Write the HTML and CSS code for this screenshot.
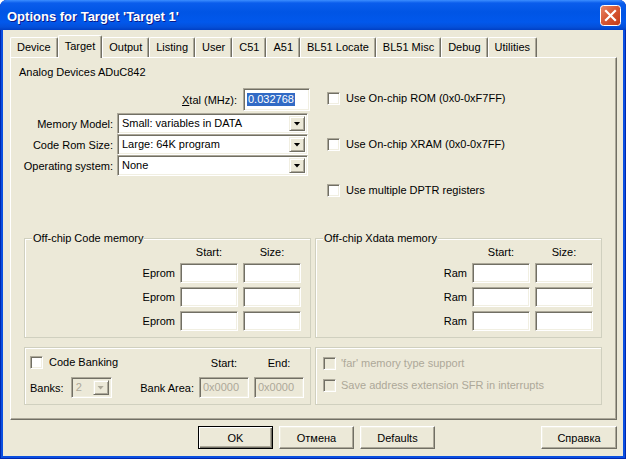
FILE: index.html
```html
<!DOCTYPE html>
<html lang="en">
<head>
    <meta charset="UTF-8">
    <title>Options for Target 'Target 1'</title>
    <link rel="stylesheet" href="styles.css">
</head>
<body>
<div class="window">
    <div class="titlebar">
        <span class="titlebar__text">Options for Target 'Target 1'</span>
        <button class="titlebar__close" aria-label="Close">
            <svg width="21" height="21" viewBox="0 0 21 21">
                <defs>
                    <linearGradient id="closeFill" x1="0" y1="0" x2="1" y2="1">
                        <stop offset="0" stop-color="#E9896B"/>
                        <stop offset="0.45" stop-color="#D85A36"/>
                        <stop offset="1" stop-color="#C23A17"/>
                    </linearGradient>
                </defs>
                <rect x="0.5" y="0.5" width="20" height="20" rx="3" fill="url(#closeFill)" stroke="#fff"/>
                <path d="M6 6 L15 15 M15 6 L6 15" stroke="#fff" stroke-width="2.2" stroke-linecap="square"/>
            </svg>
        </button>
    </div>

    <div class="client">
        <div class="tabs">
            <div class="tab">Device</div>
            <div class="tab tab--active">Target</div>
            <div class="tab">Output</div>
            <div class="tab">Listing</div>
            <div class="tab">User</div>
            <div class="tab">C51</div>
            <div class="tab">A51</div>
            <div class="tab">BL51 Locate</div>
            <div class="tab">BL51 Misc</div>
            <div class="tab">Debug</div>
            <div class="tab">Utilities</div>
        </div>

        <div class="panel">
            <div class="device-name">Analog Devices ADuC842</div>

            <div class="upper">
                <div class="settings">
                    <div class="xtal-row">
                        <span><u>X</u>tal (MHz):</span>
                        <div class="edit edit--xtal"><span class="selection">0.032768</span></div>
                    </div>
                    <div class="field-row">
                        <span class="field-label">Memory Model:</span>
                        <div class="combo"><span class="combo__value">Small: variables in DATA</span><span class="combo__button"></span></div>
                    </div>
                    <div class="field-row">
                        <span class="field-label">Code Rom Size:</span>
                        <div class="combo"><span class="combo__value">Large: 64K program</span><span class="combo__button"></span></div>
                    </div>
                    <div class="field-row">
                        <span class="field-label">Operating system:</span>
                        <div class="combo"><span class="combo__value">None</span><span class="combo__button"></span></div>
                    </div>
                </div>

                <div class="options">
                    <label class="check"><span class="check__box"></span>Use On-chip ROM (0x0-0xF7FF)</label>
                    <label class="check"><span class="check__box"></span>Use On-chip XRAM (0x0-0x7FF)</label>
                    <label class="check"><span class="check__box"></span>Use multiple DPTR registers</label>
                </div>
            </div>

            <div class="groups">
                <div class="group">
                    <span class="group__title">Off-chip Code memory</span>
                    <div class="mem-grid">
                        <span></span><span class="col-head">Start:</span><span class="col-head">Size:</span>
                        <span class="row-label">Eprom</span><div class="edit"></div><div class="edit"></div>
                        <span class="row-label">Eprom</span><div class="edit"></div><div class="edit"></div>
                        <span class="row-label">Eprom</span><div class="edit"></div><div class="edit"></div>
                    </div>
                </div>

                <div class="group">
                    <span class="group__title">Off-chip Xdata memory</span>
                    <div class="mem-grid mem-grid--xdata">
                        <span></span><span class="col-head">Start:</span><span class="col-head">Size:</span>
                        <span class="row-label">Ram</span><div class="edit"></div><div class="edit"></div>
                        <span class="row-label">Ram</span><div class="edit"></div><div class="edit"></div>
                        <span class="row-label">Ram</span><div class="edit"></div><div class="edit"></div>
                    </div>
                </div>

                <div class="group group--banking">
                    <div class="bank-row">
                        <label class="check bank-row__check"><span class="check__box"></span>Code Banking</label>
                        <span class="bank-head">Start:</span>
                        <span class="bank-head">End:</span>
                    </div>
                    <div class="bank-row bank-row--fields">
                        <span>Banks:</span>
                        <div class="combo combo--small combo--disabled"><span class="combo__value">2</span><span class="combo__button"></span></div>
                        <span class="bank-area">Bank Area:</span>
                        <div class="edit edit--bank edit--disabled">0x0000</div>
                        <div class="edit edit--bank edit--disabled">0x0000</div>
                    </div>
                </div>

                <div class="group group--flags">
                    <label class="check check--disabled"><span class="check__box"></span>'far' memory type support</label>
                    <label class="check check--disabled"><span class="check__box"></span>Save address extension SFR in interrupts</label>
                </div>
            </div>
        </div>

        <div class="buttons">
            <button class="button button--default">OK</button>
            <button class="button">Отмена</button>
            <button class="button">Defaults</button>
            <button class="button button--help">Справка</button>
        </div>
    </div>
</div>
</body>
</html>
```

FILE: styles.css
```css
/* Reset */
* {
    margin: 0;
    padding: 0;
    box-sizing: border-box;
}
body {
    width: 626px;
    height: 459px;
    overflow: hidden;
    background: #fff;
    font-family: "Liberation Sans", Arial, sans-serif;
    font-size: 11px;
    color: #000;
}

/* Window frame */
.window {
    width: 626px;
    height: 459px;
    display: flex;
    flex-direction: column;
    background: #0A4FE0;
    border-radius: 7px 7px 0 0;
    overflow: hidden;
    box-shadow: inset 1px 0 #0028B0, inset -1px 0 #0028B0, inset 0 -1px #0028B0;
}
.titlebar {
    height: 30px;
    flex: none;
    display: flex;
    align-items: flex-start;
    justify-content: space-between;
    padding: 5px 5px 0 7px;
    background: linear-gradient(to bottom, #3C8EFF 0, #0A5DEC 3px, #0055E5 12px, #0158EC 22px, #0450DA 27px, #003FC4 30px);
}
.titlebar__text {
    padding-top: 1px;
    line-height: 21px;
    font-size: 13px;
    font-weight: bold;
    color: #fff;
    text-shadow: 1px 1px #0A1A8A;
}
.titlebar__close {
    width: 21px;
    height: 21px;
    border: none;
    background: none;
    display: block;
}
.titlebar__close svg {
    display: block;
}

.client {
    flex: 1;
    margin: 0 3px 3px;
    padding: 5px 6px 0 7px;
    background: #ECE9D8;
    display: flex;
    flex-direction: column;
}

/* Tabs */
.tabs {
    height: 22px;
    display: flex;
    align-items: flex-end;
    position: relative;
    z-index: 1;
}
.tab {
    height: 20px;
    padding: 0 6px;
    line-height: 19px;
    border-top: 1px solid #fff;
    border-left: 1px solid #fff;
    border-right: 1px solid #716F64;
    border-radius: 2px 2px 0 0;
    box-shadow: inset -1px 0 #ACA899;
    white-space: nowrap;
}
.tab--active {
    height: 23px;
    margin-bottom: -1px;
    line-height: 20px;
    background: #ECE9D8;
}

.panel {
    height: 363px;
    padding: 8px 0 0 8px;
    border: 1px solid;
    border-color: #fff #716F64 #716F64 #fff;
    box-shadow: inset -1px -1px #ACA899;
}
.device-name {
    line-height: 13px;
}

/* Upper area */
.upper {
    margin-top: 9px;
    display: grid;
    grid-template-columns: 291px 1fr;
    column-gap: 17px;
}
.xtal-row {
    height: 23px;
    display: flex;
    align-items: center;
    justify-content: flex-end;
    gap: 6px;
}
.field-row {
    margin-top: 2px;
    margin-right: 2px;
    display: grid;
    grid-template-columns: 1fr 191px;
    column-gap: 4px;
    align-items: center;
}
.field-row + .field-row {
    margin-top: 0;
}
.field-label {
    text-align: right;
    white-space: nowrap;
}
.options {
    padding-top: 4px;
    display: flex;
    flex-direction: column;
    gap: 33px;
}

/* Controls */
.edit {
    height: 20px;
    background: #fff;
    border: 1px solid;
    border-color: #ACA899 #fff #fff #ACA899;
    box-shadow: inset 1px 1px #716F64, inset -1px -1px #F1EFE2;
}
.edit--xtal {
    width: 67px;
    height: 23px;
    padding: 4px 0 0 3px;
}
.selection {
    display: inline-block;
    line-height: 13px;
    padding: 0 1px;
    background: #316AC5;
    color: #fff;
}
.edit--bank {
    width: 50px;
    height: 21px;
    padding: 3px 0 0 3px;
}
.edit--disabled {
    background: #ECE9D8;
    color: #ACA899;
}

.combo {
    height: 21px;
    padding: 2px;
    display: flex;
    align-items: stretch;
    background: #fff;
    border: 1px solid;
    border-color: #ACA899 #fff #fff #ACA899;
    box-shadow: inset 1px 1px #716F64, inset -1px -1px #F1EFE2;
}
.combo__value {
    flex: 1;
    padding-left: 2px;
    line-height: 15px;
    white-space: nowrap;
}
.combo__button {
    width: 16px;
    display: flex;
    align-items: center;
    justify-content: center;
    background: #ECE9D8;
    border: 1px solid;
    border-color: #F1EFE2 #716F64 #716F64 #F1EFE2;
    box-shadow: inset 1px 1px #fff, inset -1px -1px #ACA899;
}
.combo__button::after {
    content: "";
    width: 7px;
    height: 4px;
    background: #000;
    clip-path: polygon(0 0, 100% 0, 50% 100%);
}
.combo--small {
    width: 41px;
    margin-left: 7px;
}
.combo--disabled {
    background: #ECE9D8;
    color: #ACA899;
}
.combo--disabled .combo__button::after {
    background: #ACA899;
}

.check {
    height: 13px;
    display: flex;
    align-items: center;
    gap: 6px;
    line-height: 13px;
    white-space: nowrap;
}
.check__box {
    width: 13px;
    height: 13px;
    flex: none;
    background: #fff;
    border: 1px solid;
    border-color: #ACA899 #fff #fff #ACA899;
    box-shadow: inset 1px 1px #716F64, inset -1px -1px #F1EFE2;
}
.check--disabled {
    color: #ACA899;
    gap: 5px;
}
.check--disabled .check__box {
    background: #ECE9D8;
}

/* Group boxes */
.groups {
    margin: 41px 0 0 5px;
    display: grid;
    grid-template-columns: 287px 287px;
    column-gap: 4px;
    row-gap: 9px;
}
.group {
    position: relative;
    border: 1px solid #D0D0BF;
    box-shadow: inset 1px 1px #fff;
}
.group__title {
    position: absolute;
    top: -7px;
    left: 7px;
    padding: 0 1px;
    line-height: 13px;
    background: #ECE9D8;
}
.mem-grid {
    display: grid;
    grid-template-columns: 1fr 58px 58px;
    grid-template-rows: 14px 20px 20px 20px;
    column-gap: 5px;
    row-gap: 4px;
    padding: 6px 9px 6px 8px;
}
.mem-grid--xdata {
    padding-right: 8px;
}
.col-head {
    text-align: center;
    line-height: 14px;
}
.row-label {
    text-align: right;
    align-self: center;
}

.group--banking {
    padding: 8px 6px 6px 5px;
}
.bank-row {
    height: 13px;
    display: flex;
    align-items: center;
    gap: 5px;
}
.bank-row__check {
    flex: 1;
}
.bank-head {
    width: 50px;
    text-align: center;
}
.bank-row--fields {
    height: 21px;
    margin-top: 8px;
    gap: 0;
}
.bank-area {
    flex: 1;
    text-align: right;
    margin-right: 5px;
}
.bank-row--fields .edit + .edit {
    margin-left: 5px;
}
.group--flags {
    padding: 9px 6px 0 7px;
    display: flex;
    flex-direction: column;
    gap: 9px;
}

/* Dialog buttons */
.buttons {
    margin-top: 6px;
    padding-left: 188px;
    display: flex;
    gap: 6px;
}
.button {
    width: 75px;
    height: 23px;
    font-family: "Liberation Sans", Arial, sans-serif;
    font-size: 11px;
    color: #000;
    background: #ECE9D8;
    border: 1px solid;
    border-color: #fff #716F64 #716F64 #fff;
    box-shadow: inset -1px -1px #ACA899, inset 1px 1px #F1EFE2;
}
.button--default {
    border-color: #000;
    box-shadow: inset 1px 1px #fff, inset -1px -1px #716F64, inset -2px -2px #ACA899;
}
.button--help {
    margin-left: auto;
    width: 76px;
}
```
